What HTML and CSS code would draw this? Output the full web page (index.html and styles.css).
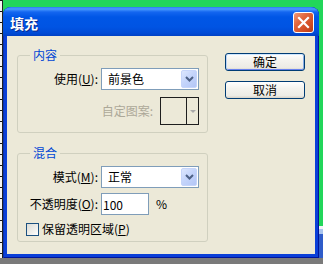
FILE: index.html
```html
<!DOCTYPE html>
<html lang="zh-CN">

<head>
    <meta charset="UTF-8">
    <meta name="viewport" content="width=device-width, initial-scale=1.0">
    <title>填充</title>
    <link rel="stylesheet" href="styles.css">
</head>

<body>
    <div class="desk-left"></div>
    <div class="desk-right"></div>
    <div class="desk-bottom"></div>

    <div class="window">
        <div class="titlebar">
            <span class="title">填充</span>
            <button type="button" class="close" aria-label="关闭">
                <svg width="13" height="13" viewBox="0 0 13 13">
                    <path d="M2 2 L11 11 M11 2 L2 11" stroke="#fff" stroke-width="2.2" stroke-linecap="square" fill="none"/>
                </svg>
            </button>
        </div>

        <div class="client">
            <div class="groups">
                <fieldset class="group">
                    <legend>内容</legend>
                    <div class="row">
                        <label class="lbl">使用(<u>U</u>):</label>
                        <div class="combo">
                            <span class="combo-text">前景色</span>
                            <span class="drop">
                                <svg width="9" height="6" viewBox="0 0 9 6">
                                    <path d="M1 1 L4.5 4.5 L8 1" stroke="#4d6185" stroke-width="2" fill="none"/>
                                </svg>
                            </span>
                        </div>
                    </div>
                    <div class="row row-pattern">
                        <span class="lbl-disabled">自定图案:</span>
                        <div class="pattern">
                            <span class="swatch"></span>
                            <span class="pdrop"><span class="tri"></span></span>
                        </div>
                    </div>
                </fieldset>

                <fieldset class="group group-blend">
                    <legend>混合</legend>
                    <div class="row">
                        <label class="lbl">模式(<u>M</u>):</label>
                        <div class="combo">
                            <span class="combo-text">正常</span>
                            <span class="drop">
                                <svg width="9" height="6" viewBox="0 0 9 6">
                                    <path d="M1 1 L4.5 4.5 L8 1" stroke="#4d6185" stroke-width="2" fill="none"/>
                                </svg>
                            </span>
                        </div>
                    </div>
                    <div class="row row-opacity">
                        <label class="lbl" for="opacity">不透明度(<u>O</u>):</label>
                        <input type="text" id="opacity" class="num" value="100">
                        <span class="pct">%</span>
                    </div>
                    <div class="row row-check">
                        <input type="checkbox" id="keep" class="check">
                        <label for="keep">保留透明区域(<u>P</u>)</label>
                    </div>
                </fieldset>
            </div>

            <div class="buttons">
                <button type="button" class="btn btn-default">确定</button>
                <button type="button" class="btn">取消</button>
            </div>
        </div>
    </div>
</body>

</html>
```

FILE: styles.css
```css
body {
    margin: 0;
    width: 323px;
    height: 264px;
    position: relative;
    overflow: hidden;
    background-color: #22d65a;
    font-family: "Noto Sans CJK SC", "Noto Sans", sans-serif;
    font-size: 12px;
    color: #000;
}

/* bits of the desktop behind the dialog */
.desk-left {
    position: absolute;
    left: 0;
    top: 0;
    width: 3px;
    height: 258px;
    background: repeating-linear-gradient(to bottom, #111 0, #111 1px, #f4f4f4 1px, #f4f4f4 11px);
    border-right: 1px solid #222;
    box-sizing: border-box;
}

.desk-right {
    position: absolute;
    right: 0;
    top: 226px;
    width: 4px;
    height: 32px;
    background: linear-gradient(to bottom, #f2f4f8 0, #f2f4f8 3px, #a9c4ee 3px, #a9c4ee 8px, #2f5cc9 8px);
}

.desk-bottom {
    position: absolute;
    left: 0;
    bottom: 0;
    width: 323px;
    height: 6px;
    background-color: #7a7a7a;
}

/* window frame */
.window {
    position: absolute;
    left: 3px;
    top: 7px;
    width: 316px;
    height: 251px;
    display: flex;
    flex-direction: column;
    background-color: #0a3fd8;
    border-radius: 8px 8px 0 0;
    overflow: hidden;
    box-shadow: inset 1px 0 #0831b0, inset -1px 0 #00149a, inset 0 -1px #00149a;
}

.titlebar {
    height: 29px;
    flex: none;
    display: flex;
    align-items: center;
    justify-content: space-between;
    padding: 0 5px 0 7px;
    background: linear-gradient(to bottom, #2a7cf2 0, #4a9bff 2px, #1466f0 5px, #0056e6 10px, #0054e3 20px, #004bd6 26px, #0040c4 29px);
}

.title {
    color: #fff;
    font-weight: bold;
    font-size: 14px;
    line-height: 16px;
    margin-top: 3px;
    text-shadow: 1px 1px #0b2a8c;
}

.close {
    width: 21px;
    height: 21px;
    margin-top: 1px;
    padding: 0;
    border: 1px solid #fff;
    border-radius: 3px;
    background: linear-gradient(135deg, #f19a7a 0%, #e2673f 35%, #cf4a22 75%, #b83a16 100%);
    display: flex;
    align-items: center;
    justify-content: center;
}

.client {
    flex: 1;
    margin: 0 4px 4px;
    background-color: #ece9d8;
    display: grid;
    grid-template-columns: 191px 80px;
    column-gap: 17px;
    align-items: start;
    padding: 12px 0 0 10px;
}

/* group boxes */
.group {
    margin: 0;
    padding: 6px 8px 7px 0;
    border: 1px solid #d0d0bf;
    border-radius: 3px;
    min-width: 0;
}

.group legend {
    margin-left: 12px;
    padding: 0 3px;
    line-height: 14px;
    color: #0046d5;
}

.group-blend {
    margin-top: 13px;
    padding-bottom: 5px;
}

.row {
    display: flex;
    align-items: center;
    height: 22px;
    line-height: 14px;
}

.lbl {
    width: 80px;
    flex: none;
    text-align: right;
}

.row-pattern {
    height: 28px;
    margin-top: 7px;
    justify-content: flex-end;
}

.lbl-disabled {
    color: #aca899;
}

.pattern {
    width: 39px;
    height: 28px;
    margin-left: 7px;
    box-sizing: border-box;
    border: 1px solid #1e1e1e;
    display: flex;
}

.swatch {
    flex: 1;
    border-right: 1px solid #1e1e1e;
}

.pdrop {
    width: 11px;
    display: flex;
    align-items: center;
    justify-content: center;
}

.tri {
    width: 0;
    height: 0;
    border-left: 3px solid transparent;
    border-right: 3px solid transparent;
    border-top: 3px solid #a9a9a9;
}

/* combo box */
.combo {
    flex: 1;
    height: 22px;
    margin-left: 3px;
    box-sizing: border-box;
    border: 1px solid #7f9db9;
    background-color: #fff;
    display: flex;
    align-items: center;
    padding: 1px 1px 1px 6px;
}

.combo-text {
    flex: 1;
}

.drop {
    width: 16px;
    height: 18px;
    box-sizing: border-box;
    border: 1px solid #c6d5fa;
    border-radius: 2px;
    background: linear-gradient(135deg, #dde7fd 0%, #c5d5fb 45%, #b3c6f6 100%);
    display: flex;
    align-items: center;
    justify-content: center;
}

.row-opacity {
    margin-top: 5px;
}

.num {
    width: 48px;
    height: 22px;
    margin: 0 0 0 3px;
    box-sizing: border-box;
    border: 1px solid #7f9db9;
    padding: 0 0 0 1px;
    font-family: inherit;
    font-size: 12px;
    color: #000;
}

.pct {
    margin-left: 7px;
}

.row-check {
    height: 14px;
    margin-top: 7px;
    padding-left: 8px;
}

.check {
    appearance: none;
    width: 13px;
    height: 13px;
    margin: 0 3px 0 0;
    box-sizing: border-box;
    border: 1px solid #1c5180;
    background: linear-gradient(135deg, #dcdcd7 0%, #f0f0ec 60%, #fff 100%);
}

/* push buttons */
.buttons {
    display: flex;
    flex-direction: column;
    gap: 10px;
    margin-top: 5px;
}

.btn {
    width: 80px;
    height: 18px;
    padding: 0;
    border: 1px solid #003c74;
    border-radius: 3px;
    background: linear-gradient(to bottom, #fff 0%, #f4f3ee 40%, #ecebe5 85%, #d8d2c6 100%);
    font-family: inherit;
    font-size: 12px;
    line-height: 14px;
    color: #000;
}

.btn-default {
    box-shadow: inset 0 1px #cee7ff, inset 1px 0 #bcd4f6, inset -1px 0 #89ade4, inset 0 -1px #6982ee;
}
```
